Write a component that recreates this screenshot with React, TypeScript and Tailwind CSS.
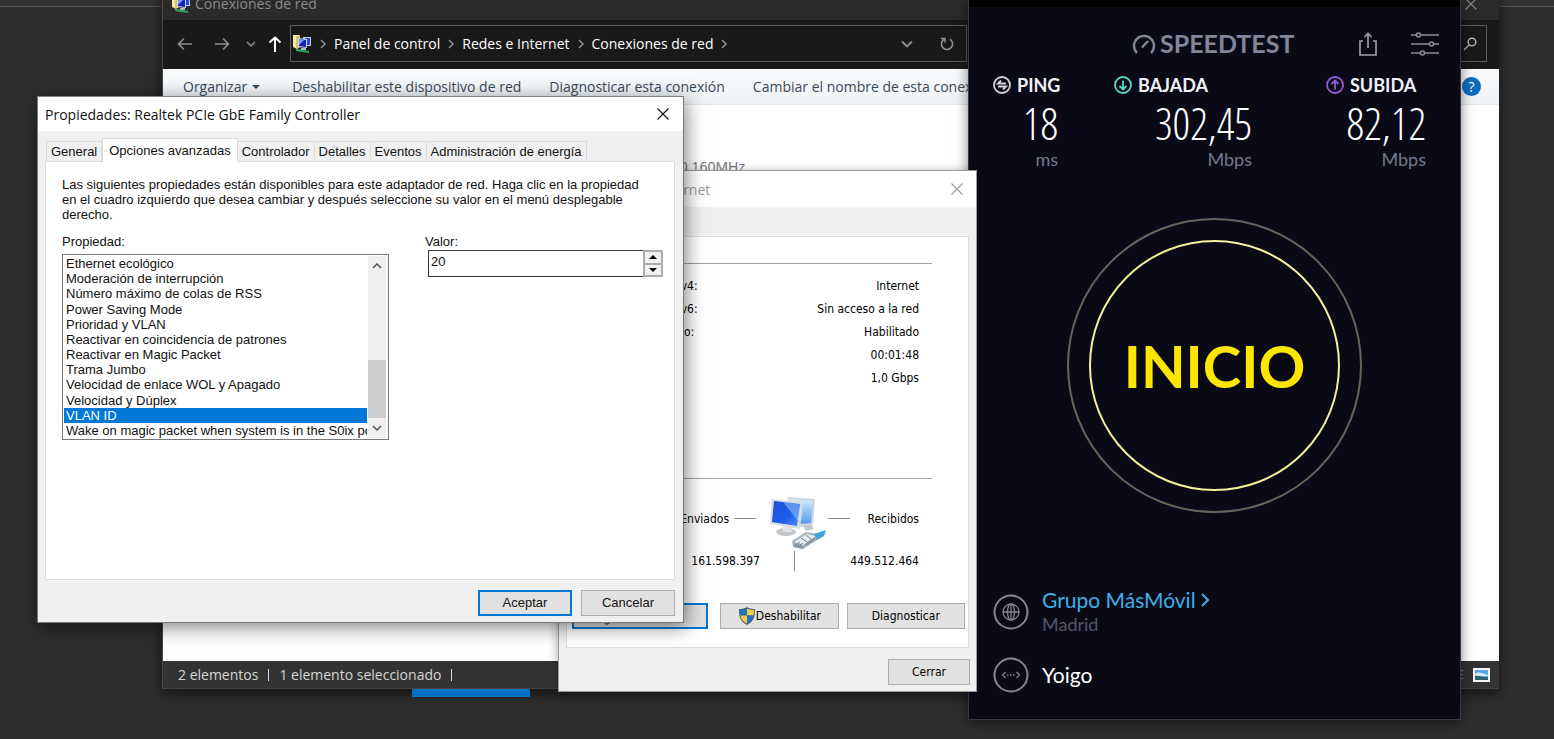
import { useState, type ReactNode } from 'react';

const tabs = ['General', 'Opciones avanzadas', 'Controlador', 'Detalles', 'Eventos', 'Administración de energía'];

const properties = [
  'Ethernet ecológico',
  'Moderación de interrupción',
  'Número máximo de colas de RSS',
  'Power Saving Mode',
  'Prioridad y VLAN',
  'Reactivar en coincidencia de patrones',
  'Reactivar en Magic Packet',
  'Trama Jumbo',
  'Velocidad de enlace WOL y Apagado',
  'Velocidad y Dúplex',
  'VLAN ID',
  'Wake on magic packet when system is in the S0ix power state',
];

const connection = [
  ['Conectividad IPv4:', 'Internet'],
  ['Conectividad IPv6:', 'Sin acceso a la red'],
  ['Estado del medio:', 'Habilitado'],
  ['Duración:', '00:01:48'],
  ['Velocidad:', '1,0 Gbps'],
];

const breadcrumbs = ['Panel de control', 'Redes e Internet', 'Conexiones de red'];

const commands = ['Deshabilitar este dispositivo de red', 'Diagnosticar esta conexión', 'Cambiar el nombre de esta conexión'];

function Chevron({ className = '', d = 'M3 1l4 4-4 4' }: { className?: string; d?: string }) {
  return (
    <svg viewBox="0 0 10 10" className={`h-[10px] w-[10px] shrink-0 ${className}`} fill="none" stroke="currentColor" strokeWidth="1.5">
      <path d={d} />
    </svg>
  );
}

function CloseIcon() {
  return (
    <svg viewBox="0 0 12 12" className="h-3 w-3" fill="none" stroke="currentColor" strokeWidth="1.1">
      <path d="M0.5 0.5l11 11M11.5 0.5l-11 11" />
    </svg>
  );
}

function NetworkFolderIcon() {
  return (
    <svg viewBox="0 0 20 20" className="h-5 w-5 shrink-0">
      <path d="M1 1h7v12l-3 2-4-2z" fill="#f5e6a0" />
      <path d="M4 2l4-1v11l-4 3z" fill="#dcc25c" />
      <path d="M11 3h8v9h-8z" fill="#c3cff0" />
      <path d="M13 4h5v7h-5z" fill="#2b46d8" />
      <path d="M6 4l9 1v9l-9-1z" fill="#c9d4f2" />
      <path d="M7 5l7 1v7l-7-1z" fill="#1a24b4" />
      <path d="M7 5l5 1-5 5z" fill="#7d9bf4" />
      <path d="M9 14h5v2H9z" fill="#b4bdca" />
      <path d="M4 15c3-1 5 1 8 1l5 1v2l-7-1c-3 0-4-1-6-1z" fill="#2fa05c" />
    </svg>
  );
}

function ShieldIcon() {
  return (
    <svg viewBox="0 0 18 20" className="h-5 w-[18px] shrink-0">
      <path d="M9 1c2 1.500 5 2 8 2 0 8-1 12-8 16C2 15 1 11 1 3c3 0 6-.5 8-2z" fill="#4d5a66" />
      <path d="M9 2.600v7H2.400C2.100 8 2 6 2 4c2.500 0 5-.4 7-1.400z" fill="#1c74c4" />
      <path d="M9 2.600v7h6.600C15.900 8 16 6 16 4c-2.500 0-5-.4-7-1.400z" fill="#f6c944" />
      <path d="M9 9.600v8.200C4.800 15.600 3 13.200 2.400 9.600z" fill="#f6c944" />
      <path d="M9 9.600v8.200c4.200-2.200 6-4.600 6.600-8.200z" fill="#1c74c4" />
    </svg>
  );
}

function ComputersIcon() {
  return (
    <svg viewBox="0 0 56 54" className="h-[54px] w-14 shrink-0">
      <defs>
        <linearGradient id="screenFront" x1="0" y1="0" x2="1" y2="1">
          <stop offset="0" stopColor="#1d52d8" />
          <stop offset="0.6" stopColor="#1c5cec" />
          <stop offset="1" stopColor="#4f95f5" />
        </linearGradient>
        <linearGradient id="screenBack" x1="0" y1="0" x2="0" y2="1">
          <stop offset="0" stopColor="#d6ebfb" />
          <stop offset="1" stopColor="#4c9cf0" />
        </linearGradient>
      </defs>
      <path d="M17 0l28 2-2 27-14 1z" fill="#cfd6dc" />
      <path d="M19 2l24 2-2 22-12 1z" fill="url(#screenBack)" />
      <path d="M33 29l8-1 3 4-8 2z" fill="#c4c8cb" />
      <ellipse cx="16" cy="35" rx="10" ry="4" fill="#c4c7ca" />
      <path d="M12 28h9l1 7h-9z" fill="#e2e4e6" />
      <path d="M2 2l31 3-3 27L0 27z" fill="#d8dee3" />
      <path d="M4 4l26 3-3 22L2 25z" fill="url(#screenFront)" />
      <path d="M13 5l17 2-2 17z" fill="#9fd0fb" opacity="0.5" />
      <path d="M22 44l14-9 12 2-1 6-14 9-10-2z" fill="#a6b0b9" />
      <path d="M24 45l13-8 9 2-13 9z" fill="#e6ebef" />
      <path d="M24 46l9 3v3l-9-2zM36 46l9-6v3l-9 6z" fill="#8d979f" />
      <path d="M27 47l3-2M30 48l3-2M36 38l6 5M31 41l6 4" stroke="#7a848c" />
      <path d="M44 37l12-4-2 6-7 4z" fill="#3fa4dc" />
    </svg>
  );
}

function PushButton({ children, primary = false, className = '' }: { children: ReactNode; primary?: boolean; className?: string }) {
  return (
    <button
      type="button"
      className={`flex items-center justify-center bg-[#e1e1e1] hover:bg-[#e5f1fb] ${
        primary ? 'border-2 border-[#0078d7]' : 'border border-[#adadad]'
      } ${className}`}
    >
      {children}
    </button>
  );
}

function Explorer() {
  return (
    <section className="absolute -top-[13px] left-[162px] right-[55px] flex h-[702px] flex-col border-l border-[#4a4a4a] bg-white font-['Open_Sans','Noto_Sans',sans-serif] text-[14px] shadow-[0_4px_12px_rgba(0,0,0,0.6)]">
      <header className="flex h-[33px] shrink-0 items-center gap-1 bg-[#2b2b2b] pl-2 pr-[22px] text-[#8b8b8b]">
        <NetworkFolderIcon />
        <h1 className="flex-1">Conexiones de red</h1>
        <button type="button" aria-label="Cerrar ventana">
          <CloseIcon />
        </button>
      </header>

      <nav className="flex h-[49px] shrink-0 items-center bg-[#191919] pb-[2px] pr-3 text-[#8f8f8f]">
        <button type="button" aria-label="Atrás" className="ml-[14px]">
          <svg viewBox="0 0 16 14" className="h-[14px] w-4" fill="none" stroke="currentColor" strokeWidth="1.6">
            <path d="M7 1.500L1.500 7 7 12.500M1.500 7H15" />
          </svg>
        </button>
        <button type="button" aria-label="Adelante" className="ml-[21px]">
          <svg viewBox="0 0 16 14" className="h-[14px] w-4" fill="none" stroke="currentColor" strokeWidth="1.6">
            <path d="M9 1.500L14.500 7 9 12.500M14.500 7H1" />
          </svg>
        </button>
        <button type="button" aria-label="Ubicaciones recientes" className="ml-4">
          <Chevron d="M1 3l4 4 4-4" />
        </button>
        <button type="button" aria-label="Subir" className="ml-3 text-white">
          <svg viewBox="0 0 14 16" className="h-4 w-[14px]" fill="none" stroke="currentColor" strokeWidth="2">
            <path d="M1.500 6.500L7 1.500l5.500 5M7 1.500V16" />
          </svg>
        </button>
        <div className="ml-2 flex h-[37px] w-[677px] items-center border border-[#5c5c5c] pl-[1px] pr-3">
          <NetworkFolderIcon />
          <ol className="flex flex-1 items-center">
            {breadcrumbs.map((crumb) => (
              <li key={crumb} className="flex items-center">
                <Chevron className="mx-[6px]" />
                <a href="#" className="text-white">
                  {crumb}
                </a>
              </li>
            ))}
            <li>
              <Chevron className="mx-[6px]" />
            </li>
          </ol>
          <button type="button" aria-label="Ubicaciones anteriores" className="mr-7">
            <Chevron className="scale-125" d="M1 3l4 4 4-4" />
          </button>
          <button type="button" aria-label="Actualizar">
            <svg viewBox="0 0 14 14" className="h-[14px] w-[14px]" fill="none" stroke="currentColor" strokeWidth="1.6">
              <path d="M10 2.200A5.600 5.600 0 1 1 4 2.200M1 1.500h4v4" />
            </svg>
          </button>
        </div>
        <div className="ml-3 flex h-[37px] flex-1 items-center justify-end border border-[#5c5c5c] pr-[9px]">
          <button type="button" aria-label="Buscar">
            <svg viewBox="0 0 14 14" className="h-[14px] w-[14px]" fill="none" stroke="#b0b0b0" strokeWidth="1.500">
              <circle cx="9" cy="5" r="3.800" />
              <path d="M6 8L1 13" />
            </svg>
          </button>
        </div>
      </nav>

      <div className="flex h-9 shrink-0 items-center gap-7 border-b border-[#e4e9ee] bg-gradient-to-b from-[#f9fbfc] to-[#eef3f6] pl-5 pr-[18px] text-[#3c4858]">
        <button type="button" className="mr-1 flex items-center gap-[5px]">
          Organizar
          <svg viewBox="0 0 8 4" className="h-1 w-2" fill="currentColor">
            <path d="M0 0h8L4 4z" />
          </svg>
        </button>
        {commands.map((command) => (
          <button key={command} type="button" className="whitespace-nowrap">
            {command}
          </button>
        ))}
        <button type="button" aria-label="Ayuda" className="ml-auto flex h-[19px] w-[19px] shrink-0 items-center justify-center rounded-full bg-[#0f6cbd] text-white">
          ?
        </button>
      </div>

      <main className="flex-1 pt-[51px]">
        <p className="w-[582px] text-right text-[#757575]">Intel(R) Wi-Fi 6 AX200 160MHz</p>
      </main>

      <footer className="flex h-7 shrink-0 items-center gap-[10px] border-b border-[#444] bg-[#333] pl-[15px] pr-[9px] text-[#d6d6d6]">
        <span>2 elementos</span>
        <span className="h-3 w-px bg-[#d6d6d6]" />
        <span>1 elemento seleccionado</span>
        <span className="h-3 w-px bg-[#d6d6d6]" />
        <button type="button" aria-label="Detalles" className="ml-auto">
          <svg viewBox="0 0 16 12" className="h-3 w-4" stroke="#888">
            <path d="M0 1.500h16M0 5.500h16M0 9.500h16" />
          </svg>
        </button>
        <button type="button" aria-label="Iconos grandes">
          <svg viewBox="0 0 17 14" className="h-[14px] w-[17px]">
            <rect width="17" height="14" fill="#f2f6fa" />
            <rect x="2" y="2" width="13" height="10" fill="#5aa7e6" />
            <path d="M2 6c4-3 6-1 13 1v1H2z" fill="#d5e9f7" />
            <path d="M2 8c4-1 8 2 13 1v3H2z" fill="#2f5f70" />
          </svg>
        </button>
      </footer>
    </section>
  );
}

function Metric({ label, value, unit, icon, className = '' }: { label: string; value: string; unit: string; icon: ReactNode; className?: string }) {
  return (
    <div className={className}>
      <h3 className="flex items-center gap-[6px] text-[18px] leading-5 font-bold text-[#f1f1f6]">
        {icon}
        {label}
      </h3>
      <p className="text-right font-['Open_Sans_Condensed_Light','Roboto_Condensed_Light','Roboto_Condensed',Roboto,sans-serif] text-[44px] leading-[56px] font-light text-white">
        {value}
      </p>
      <p className="text-right text-[18px] leading-4 text-[#77778c]">{unit}</p>
    </div>
  );
}

function RoundIcon({ className, children }: { className: string; children: ReactNode }) {
  return (
    <svg viewBox="0 0 18 18" className={`h-[18px] w-[18px] shrink-0 ${className}`} fill="none" stroke="currentColor" strokeWidth="1.800">
      <circle cx="9" cy="9" r="8" />
      {children}
    </svg>
  );
}

function Speedtest() {
  return (
    <section className="absolute left-[968px] top-0 flex h-[720px] w-[493px] flex-col border border-t-0 border-[#3a3a44] bg-[#0a0a17] font-[Lato,sans-serif] shadow-[0_2px_12px_rgba(0,0,0,0.5)]">
      <div className="h-[7px] shrink-0 bg-black" />
      <header className="flex h-[68px] shrink-0 items-center pl-[163px] pr-[21px] pt-[5px] text-[#85859a]">
        <svg viewBox="0 0 24 22" className="h-[22px] w-6" fill="none" stroke="currentColor" strokeWidth="2.400">
          <path d="M5 20A10 10 0 1 1 19 20" />
          <path d="M10 14.500L16 8" />
        </svg>
        <h2 className="ml-1 flex-1 text-[25px] font-bold">SPEEDTEST</h2>
        <button type="button" aria-label="Compartir" className="mr-[34px]">
          <svg viewBox="0 0 18 24" className="h-6 w-[18px]" fill="none" stroke="#a0a0b0" strokeWidth="1.600">
            <path d="M4 9H1v14h16V9h-3M9 16V2M5.500 5L9 1.500 12.500 5" />
          </svg>
        </button>
        <button type="button" aria-label="Ajustes">
          <svg viewBox="0 0 28 24" className="h-6 w-7" fill="none" stroke="#8b8b9c" strokeWidth="1.600">
            <path d="M0 3h5M10 3h18M0 12h18M23 12h5M0 21h9M14 21h14" />
            <circle cx="7.500" cy="3" r="2" />
            <circle cx="20.500" cy="12" r="2" />
            <circle cx="11.500" cy="21" r="2" />
          </svg>
        </button>
      </header>

      <div className="flex shrink-0 pl-6 pr-[34px]">
        <Metric
          label="PING"
          value="18"
          unit="ms"
          className="w-[65px]"
          icon={
            <RoundIcon className="text-[#d4d4e0]">
              <path d="M13 7.500H5l3-3M5 10.500h8l-3 3" />
            </RoundIcon>
          }
        />
        <Metric
          label="BAJADA"
          value="302,45"
          unit="Mbps"
          className="ml-14 w-[138px]"
          icon={
            <RoundIcon className="text-[#5fd6c6]">
              <path d="M9 4.500v9M5.500 10L9 13.500l3.500-3.500" />
            </RoundIcon>
          }
        />
        <Metric
          label="SUBIDA"
          value="82,12"
          unit="Mbps"
          className="ml-auto w-[100px]"
          icon={
            <RoundIcon className="text-[#9459d9]">
              <path d="M9 13.500v-9M5.500 8L9 4.500 12.500 8" />
            </RoundIcon>
          }
        />
      </div>

      <div className="mt-[51px] flex shrink-0 justify-center">
        <div className="flex h-[295px] w-[295px] items-center justify-center rounded-full border-2 border-[#66655c]">
          <button type="button" className="h-[251px] w-[251px] rounded-full border-2 border-[#f4f09a] text-[58px] font-bold text-[#ffe600]">
            INICIO
          </button>
        </div>
      </div>

      <div className="mt-[75px] flex items-center gap-[13px] pl-6">
        <svg viewBox="0 0 36 36" className="h-9 w-9 shrink-0" fill="none" stroke="#85858f" strokeWidth="2">
          <circle cx="18" cy="18" r="16.500" />
          <g strokeWidth="1.300">
            <circle cx="18" cy="18" r="8" />
            <ellipse cx="18" cy="18" rx="3.500" ry="8" />
            <path d="M10 18h16M18 10v16" />
          </g>
        </svg>
        <div>
          <a href="#" className="flex items-center gap-1 text-[21px] leading-6 text-[#3fb0e8]">
            Grupo MásMóvil
            <svg viewBox="0 0 10 14" className="h-[14px] w-[10px]" fill="none" stroke="currentColor" strokeWidth="2">
              <path d="M2 1l6 6-6 6" />
            </svg>
          </a>
          <p className="text-[18px] leading-6 text-[#55556a]">Madrid</p>
        </div>
      </div>
      <div className="mt-[21px] flex items-center gap-[13px] pl-6">
        <svg viewBox="0 0 36 36" className="h-9 w-9 shrink-0" fill="none" stroke="#85858f" strokeWidth="2">
          <circle cx="18" cy="18" r="16.500" />
          <g strokeWidth="1.300">
            <path d="M12.500 15L9.500 18l3 3M23.500 15l3 3-3 3" />
            <path d="M14 18h8" strokeDasharray="1.500 1.500" />
          </g>
        </svg>
        <p className="text-[21px] leading-6 text-white">Yoigo</p>
      </div>
    </section>
  );
}

function StatusDialog() {
  return (
    <section className="absolute left-[558px] top-[170px] flex h-[522px] w-[419px] flex-col border border-[#9a9a9a] bg-[#f0f0f0] font-['DejaVu_Sans_Condensed','DejaVu_Sans',sans-serif] text-[12px] shadow-[0_2px_10px_rgba(0,0,0,0.35)]">
      <header className="flex h-9 shrink-0 items-center bg-white pl-[27px] pr-[13px] font-['Open_Sans','Noto_Sans',sans-serif] text-[14px] text-[#999]">
        <h2 className="flex-1">Estado de Ethernet</h2>
        <button type="button" aria-label="Cerrar estado">
          <CloseIcon />
        </button>
      </header>

      <div className="mx-[7px] mt-[29px] flex flex-1 flex-col border border-[#dcdcdc] bg-white">
        <div className="flex items-center gap-2 pl-2 pr-9 pt-[18px]">
          <h3 className="leading-4">Conexión</h3>
          <span className="h-px flex-1 bg-[#a0a0a0]" />
        </div>
        <dl className="mt-[3px] pl-[30px] pr-[49px]">
          {connection.map(([name, value]) => (
            <div key={name} className="flex h-[23px] items-center justify-between">
              <dt>{name}</dt>
              <dd>{value}</dd>
            </div>
          ))}
        </dl>

        <div className="mt-[81px] flex items-center gap-2 pl-2 pr-9">
          <h3 className="leading-4">Actividad</h3>
          <span className="h-px flex-1 bg-[#a0a0a0]" />
        </div>
        <div className="mt-[11px] grid grid-cols-[193px_1fr_91px] items-center pr-[49px]">
          <div className="flex items-center justify-end gap-[5px] pb-[11px] pr-1">
            Enviados
            <span className="h-px w-[22px] bg-[#888]" />
          </div>
          <div className="flex justify-center pl-2">
            <ComputersIcon />
          </div>
          <div className="flex items-center justify-between pb-[11px]">
            <span className="h-px w-[22px] bg-[#888]" />
            Recibidos
          </div>
          <span className="text-right">161.598.397</span>
          <span className="mx-auto h-5 w-px bg-[#888]" />
          <span className="text-right">449.512.464</span>
        </div>

        <div className="mt-auto flex pb-[18px] pl-[5px] pr-[3px]">
          <PushButton primary className="h-[26px] w-[137px]">
            <ShieldIcon />
            Propiedades
          </PushButton>
          <PushButton className="ml-3 h-[26px] w-[119px]">
            <ShieldIcon />
            Deshabilitar
          </PushButton>
          <PushButton className="ml-2 h-[26px] w-[119px]">Diagnosticar</PushButton>
        </div>
      </div>

      <footer className="flex shrink-0 justify-end pb-[6px] pr-[6px] pt-[11px]">
        <PushButton className="h-[26px] w-[82px]">Cerrar</PushButton>
      </footer>
    </section>
  );
}

function PropertiesDialog() {
  const [tab, setTab] = useState('Opciones avanzadas');
  const [selected, setSelected] = useState('VLAN ID');
  const [value, setValue] = useState('20');

  return (
    <section className="absolute left-[37px] top-[96px] flex h-[527px] w-[647px] flex-col border border-[#7a7a7a] bg-[#f0f0f0] font-['Liberation_Sans',Arial,sans-serif] text-[13px] text-[#111] shadow-[2px_4px_18px_rgba(0,0,0,0.5)]">
      <header className="flex h-[34px] shrink-0 items-center bg-white pl-[7px] pr-[14px] font-['Open_Sans','Noto_Sans',sans-serif] text-[14px]">
        <h2 className="flex-1">Propiedades: Realtek PCIe GbE Family Controller</h2>
        <button type="button" aria-label="Cerrar propiedades">
          <CloseIcon />
        </button>
      </header>

      <div role="tablist" className="flex h-[30px] shrink-0 items-end pl-2">
        {tabs.map((name) => (
          <button
            key={name}
            type="button"
            role="tab"
            aria-selected={tab === name}
            onClick={() => setTab(name)}
            className={
              tab === name
                ? 'relative -mb-px h-6 border border-b-0 border-[#dcdcdc] bg-white px-[6px]'
                : 'h-5 border border-b-0 border-l-0 border-[#dcdcdc] px-1 first:border-l'
            }
          >
            {name}
          </button>
        ))}
      </div>

      <div role="tabpanel" className="ml-[7px] mr-2 flex h-[419px] shrink-0 flex-col border border-[#dcdcdc] bg-white pl-4 pr-2 pt-[15px]">
        <p className="w-[585px] leading-[15px]">
          Las siguientes propiedades están disponibles para este adaptador de red. Haga clic en la propiedad en el cuadro izquierdo que desea
          cambiar y después seleccione su valor en el menú desplegable derecho.
        </p>
        <div className="mt-3 flex items-start gap-9">
          <div className="w-[327px] shrink-0">
            <span id="property-label" className="block leading-[15px]">
              Propiedad:
            </span>
            <div className="mt-[5px] flex h-[186px] border border-[#7a7a7a] p-px">
              <ul role="listbox" aria-labelledby="property-label" className="grid min-w-0 flex-1 grid-rows-12">
                {properties.map((property) => (
                  <li
                    key={property}
                    role="option"
                    aria-selected={selected === property}
                    onClick={() => setSelected(property)}
                    className={`overflow-hidden whitespace-nowrap pl-[2px] leading-[15px] ${selected === property ? 'bg-[#0078d7] text-white' : ''}`}
                  >
                    {property}
                  </li>
                ))}
              </ul>
              <div className="mx-px flex w-[18px] flex-col items-center bg-[#f0f0f0] text-[#505050]">
                <button type="button" aria-label="Desplazar arriba" className="flex h-5 items-center">
                  <Chevron d="M1 7l4-4 4 4" />
                </button>
                <span className="mt-auto h-[58px] w-full bg-[#cdcdcd]" />
                <button type="button" aria-label="Desplazar abajo" className="flex h-5 items-center">
                  <Chevron d="M1 3l4 4 4-4" />
                </button>
              </div>
            </div>
          </div>
          <div className="w-[238px]">
            <label htmlFor="value" className="block leading-[15px]">
              Valor:
            </label>
            <div className="ml-[3px] mt-px flex h-[27px]">
              <input
                id="value"
                value={value}
                onChange={(event) => setValue(event.target.value)}
                className="min-w-0 flex-1 border border-r-0 border-[#333] bg-white pb-1 pl-[2px] outline-none"
              />
              <div className="flex w-5 flex-col border border-[#adadad] bg-[#f0f0f0]">
                <button
                  type="button"
                  aria-label="Aumentar"
                  onClick={() => setValue(String(Number(value) + 1))}
                  className="flex flex-1 items-center justify-center border border-[#adadad]"
                >
                  <svg viewBox="0 0 8 4" className="h-1 w-2">
                    <path d="M0 4h8L4 0z" />
                  </svg>
                </button>
                <button
                  type="button"
                  aria-label="Disminuir"
                  onClick={() => setValue(String(Number(value) - 1))}
                  className="flex flex-1 items-center justify-center border border-[#adadad]"
                >
                  <svg viewBox="0 0 8 4" className="h-1 w-2">
                    <path d="M0 0h8L4 4z" />
                  </svg>
                </button>
              </div>
            </div>
          </div>
        </div>
      </div>

      <footer className="flex justify-end gap-[9px] pr-2 pt-[10px]">
        <PushButton primary className="h-[26px] w-[94px]">
          Aceptar
        </PushButton>
        <PushButton className="h-[26px] w-[94px]">Cancelar</PushButton>
      </footer>
    </section>
  );
}

export default function App() {
  return (
    <div className="relative min-h-screen overflow-hidden bg-[#2d2d2d]">
      <div className="h-[7px] border-b border-[#555] bg-[#333]" />
      <Explorer />
      {/* window peeking out below the explorer */}
      <div className="absolute left-[412px] top-[689px] h-2 w-[118px] bg-[#0070c4]" />
      <Speedtest />
      <StatusDialog />
      <PropertiesDialog />
    </div>
  );
}
